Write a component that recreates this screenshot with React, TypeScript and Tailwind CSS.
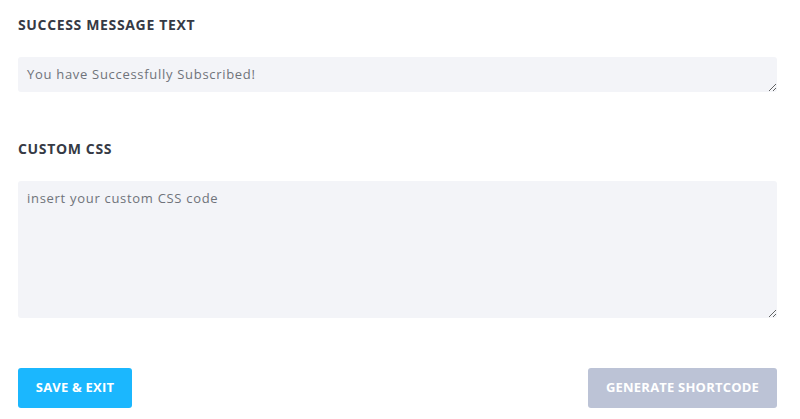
export default function App() {
  return (
    <div className="w-[800px] h-[419px] bg-white px-[18px] pt-[15px] overflow-hidden" style={{ fontFamily: '"Open Sans", "Liberation Sans", sans-serif' }}>
      {/* Success message */}
      <label className="block text-[14px] font-bold tracking-[0.65px] text-[#363a45] leading-[20px] uppercase">
        Success Message Text
      </label>
      <textarea
        defaultValue="You have Successfully Subscribed!"
        className="mt-[22px] block w-[759px] h-[35px] bg-[#f3f4f8] rounded-[3px] px-[9px] py-[8px] text-[13px] leading-[18px] tracking-[0.7px] text-[#6f737a] outline-none"
      />

      {/* Custom CSS */}
      <label className="mt-[47px] block text-[14px] font-bold tracking-[0.65px] text-[#363a45] leading-[20px] uppercase">
        Custom CSS
      </label>
      <textarea
        placeholder="insert your custom CSS code"
        className="mt-[22px] block w-[759px] h-[137px] bg-[#f3f4f8] rounded-[3px] px-[9px] py-[8px] text-[13px] leading-[18px] tracking-[0.7px] text-[#6f737a] placeholder:text-[#6f737a] outline-none"
      />

      {/* Actions */}
      <div className="mt-[50px] flex justify-between w-[759px]">
        <button className="w-[114px] h-[40px] bg-[#1bb7fe] rounded-[3px] text-white text-[13px] font-bold tracking-[0.2px]">
          SAVE &amp; EXIT
        </button>
        <button className="w-[189px] h-[40px] bg-[#bcc3d6] rounded-[3px] text-white text-[13px] font-bold tracking-[0.2px]">
          GENERATE SHORTCODE
        </button>
      </div>
    </div>
  )
}
